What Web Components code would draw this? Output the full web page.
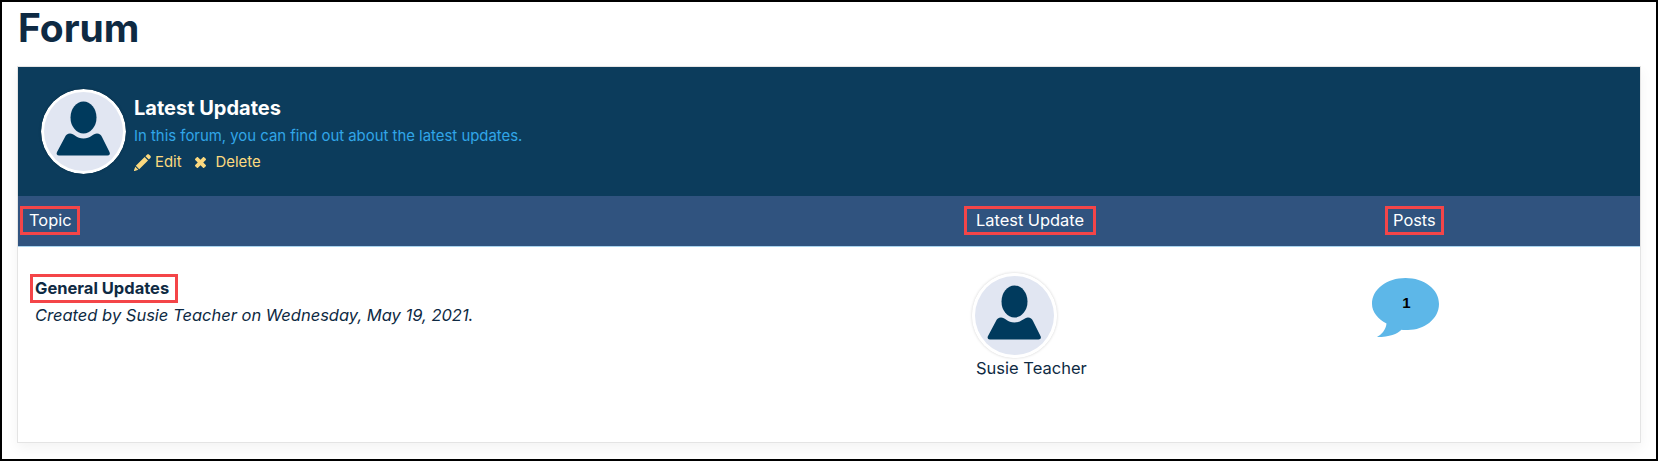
<!DOCTYPE html>
<html>
<head>
<meta charset="utf-8">
<title>Forum</title>
<style>
  html, body { margin: 0; padding: 0; background: #fff; }
  body { font-family: Inter, "Open Sans", sans-serif; color: #0e2a43; }
</style>
</head>
<body>
<forum-page>
  <forum-card>
    <forum-banner slot="banner" heading="Latest Updates" text="In this forum, you can find out about the latest updates."></forum-banner>
    <forum-columns slot="columns"></forum-columns>
    <forum-topic slot="rows" name="General Updates" meta="Created by Susie Teacher on Wednesday, May 19, 2021." author="Susie Teacher" posts="1"></forum-topic>
  </forum-card>
</forum-page>

<script>
class UserAvatar extends HTMLElement {
  constructor() {
    super();
    this.attachShadow({ mode: "open" });
    this.shadowRoot.innerHTML = `
      <style>
        :host {
          display: block;
          width: 85px;
          height: 85px;
          flex: none;
        }
        svg { display: block; width: 100%; height: 100%; border-radius: 50%; box-shadow: 0 0 3px rgba(0,0,0,0.18); }
      </style>
      <svg viewBox="0 0 85 85">
        <circle cx="42.5" cy="42.5" r="42.5" fill="#fff"/>
        <circle cx="42.5" cy="42.5" r="39.5" fill="#e1e6f2"/>
        <ellipse cx="42.5" cy="28.5" rx="13" ry="16" fill="#003a5d"/>
        <path d="M29 44.500c4 0 6.500 5 13.500 5s9.500-5 13.500-5c2.500 0 4 1.500 5 3.500l7.500 15c1 2 0 3.500-2 3.500H18c-2 0-3-1.500-2-3.500L24 48c1-2 2.500-3.500 5-3.500z" fill="#003a5d"/>
      </svg>
    `;
  }
}

class CalloutText extends HTMLElement {
  constructor() {
    super();
    this.attachShadow({ mode: "open" });
    this.shadowRoot.innerHTML = `
      <style>
        :host {
          display: inline-block;
          border: 3px solid #f44548;
          box-sizing: border-box;
          line-height: 23px;
        }
      </style>
      <slot></slot>
    `;
  }
}

class ForumBanner extends HTMLElement {
  constructor() {
    super();
    this.attachShadow({ mode: "open" });
    this.shadowRoot.innerHTML = `
      <style>
        :host {
          display: flex;
          align-items: flex-start;
          gap: 8px;
          height: 129px;
          box-sizing: border-box;
          padding: 22px 0 0 23px;
          background: #0c3c5c;
        }
        .body { padding-top: 6px; }
        h2 { margin: 0; font-size: 20px; line-height: 26px; font-weight: 700; color: #fff; }
        p { margin: 4px 0 0; font-size: 14.900px; line-height: 22px; color: #31a6e8; }
        .actions { display: flex; gap: 12px; margin-top: 4px; font-size: 14.900px; line-height: 22px; color: #fbd97f; }
        .actions span { display: flex; align-items: center; gap: 4px; }
        svg { display: block; fill: #fbd97f; }
        .pencil { width: 17px; height: 17px; }
        .cross { width: 13px; height: 13px; margin-right: 5px; }
      </style>
      <user-avatar></user-avatar>
      <div class="body">
        <h2></h2>
        <p></p>
        <div class="actions">
          <span>
            <svg class="pencil" viewBox="0 0 16 16"><path d="M12.200.6c.6-.6 1.500-.6 2.100 0l1.100 1.100c.6.600.6 1.500 0 2.100l-1.400 1.400-3.200-3.200zM10 2.800l3.200 3.200-8.300 8.300-3.200-3.200zM1.200 11.900l2.900 2.900L.7 16c-.5.100-.8-.2-.7-.7z"/></svg>
            Edit
          </span>
          <span>
            <svg class="cross" viewBox="0 0 16 16"><path d="M1.500 3.500l2-2c.4-.4 1-.4 1.400 0L8 4.600l3.100-3.100c.4-.4 1-.4 1.400 0l2 2c.4.400.4 1 0 1.400L11.400 8l3.100 3.100c.4.400.4 1 0 1.400l-2 2c-.4.400-1 .4-1.400 0L8 11.400l-3.100 3.100c-.4.400-1 .4-1.400 0l-2-2c-.4-.4-.4-1 0-1.400L4.600 8 1.500 4.900c-.4-.4-.4-1 0-1.400z"/></svg>
            Delete
          </span>
        </div>
      </div>
    `;
  }

  connectedCallback() {
    this.shadowRoot.querySelector("h2").textContent = this.getAttribute("heading");
    this.shadowRoot.querySelector("p").textContent = this.getAttribute("text");
  }
}

class ForumColumns extends HTMLElement {
  constructor() {
    super();
    this.attachShadow({ mode: "open" });
    this.shadowRoot.innerHTML = `
      <style>
        :host {
          display: grid;
          grid-template-columns: 946px 421px 1fr;
          align-items: center;
          height: 51px;
          box-sizing: border-box;
          padding: 0 0 2px 4px;
          background: #30537f;
          border-bottom: 1px solid #a9d3ee;
          color: #fff;
          font-size: 16.400px;
        }
        callout-text { padding: 0 5px 0 6px; margin-left: 2px; }
        .latest { padding: 0 9px 0 9px; margin-left: 0; }
        .posts { padding: 0 5px 0 5px; margin-left: 0; }
        div { margin-left: -4px; }
        div:first-child { margin-left: 0; }
      </style>
      <div><callout-text>Topic</callout-text></div>
      <div><callout-text class="latest">Latest Update</callout-text></div>
      <div><callout-text class="posts">Posts</callout-text></div>
    `;
  }
}

class ForumTopic extends HTMLElement {
  constructor() {
    super();
    this.attachShadow({ mode: "open" });
    this.shadowRoot.innerHTML = `
      <style>
        :host {
          display: grid;
          grid-template-columns: 946px 421px 1fr;
          padding-top: 25px;
          font-size: 16.500px;
        }
        .topic { padding: 2px 0 0 12px; }
        callout-text { padding: 0 6px 0 2px; font-weight: 700; }
        .meta { margin: 1px 0 0 5px; line-height: 22px; font-style: italic; }
        .latest { padding: 1px 0 0 8px; }
        .name { padding: 0 0 0 4px; margin-top: -1px; line-height: 22px; }
        .count { position: relative; width: 67px; height: 59px; margin: 6px 0 0 -13px; }
        .count svg { display: block; width: 100%; height: 100%; }
        .count b {
          position: absolute;
          left: 2px;
          right: 0;
          top: 16px;
          text-align: center;
          font: 700 15px/18px "Liberation Sans", sans-serif;
          color: #000;
        }
      </style>
      <div class="topic">
        <callout-text class="title"></callout-text>
        <p class="meta"></p>
      </div>
      <div class="latest">
        <user-avatar></user-avatar>
        <div class="name"></div>
      </div>
      <div>
        <div class="count">
          <svg viewBox="0 0 67 59"><path d="M33.500 0C52 0 67 11 67 26S52 52 36 52c-3 0-4.500 0-6.500-.3C25 56 18 59 5 59c4-2 9-7 9.500-13.500C6 41 0 34 0 26 0 11 15 0 33.500 0z" fill="#5db7e8"/></svg>
          <b></b>
        </div>
      </div>
    `;
  }

  connectedCallback() {
    const root = this.shadowRoot;
    root.querySelector(".title").textContent = this.getAttribute("name");
    root.querySelector(".meta").textContent = this.getAttribute("meta");
    root.querySelector(".name").textContent = this.getAttribute("author");
    root.querySelector("b").textContent = this.getAttribute("posts");
  }
}

class ForumCard extends HTMLElement {
  constructor() {
    super();
    this.attachShadow({ mode: "open" });
    this.shadowRoot.innerHTML = `
      <style>
        :host {
          display: block;
          height: 377px;
          box-sizing: border-box;
          background: #fff;
          border: 1px solid #e4e4e4;
          box-shadow: 0 5px 12px rgba(0,0,0,0.05);
        }
      </style>
      <slot name="banner"></slot>
      <slot name="columns"></slot>
      <slot name="rows"></slot>
    `;
  }
}

class ForumPage extends HTMLElement {
  constructor() {
    super();
    this.attachShadow({ mode: "open" });
    this.shadowRoot.innerHTML = `
      <style>
        :host {
          display: block;
          width: 1658px;
          height: 461px;
          box-sizing: border-box;
          border: 2px solid #000;
          padding: 0 15px;
          overflow: hidden;
        }
        h1 { margin: 0; padding: 1px 0 0 1px; height: 64px; box-sizing: border-box; font-size: 39px; line-height: 50px; font-weight: 700; color: #0e2a43; }
      </style>
      <h1>Forum</h1>
      <slot></slot>
    `;
  }
}

customElements.define("user-avatar", UserAvatar);
customElements.define("callout-text", CalloutText);
customElements.define("forum-banner", ForumBanner);
customElements.define("forum-columns", ForumColumns);
customElements.define("forum-topic", ForumTopic);
customElements.define("forum-card", ForumCard);
customElements.define("forum-page", ForumPage);
</script>
</body>
</html>
